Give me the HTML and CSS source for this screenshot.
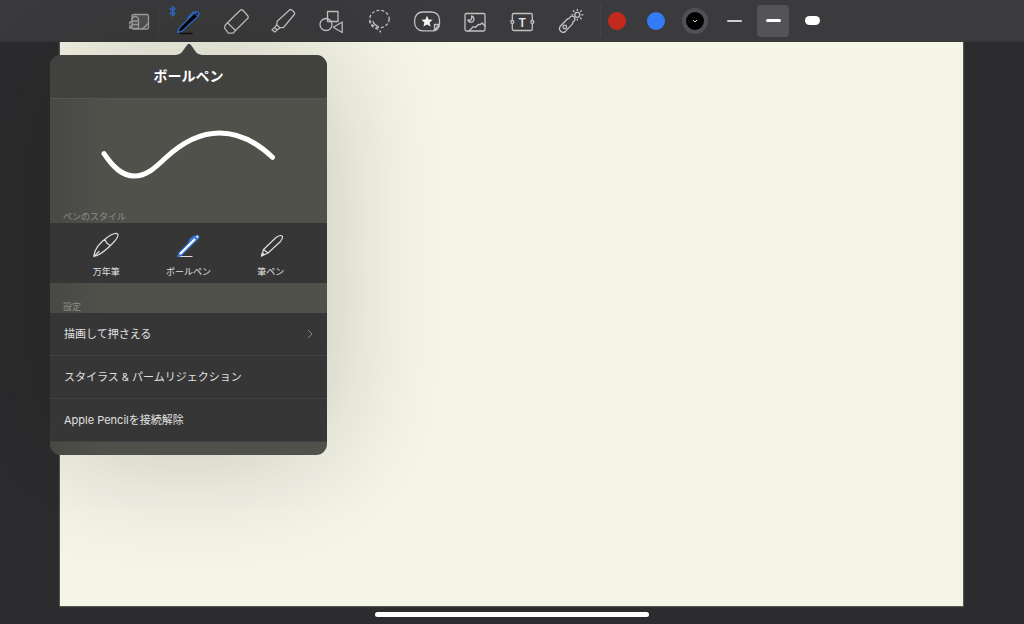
FILE: index.html
```html
<!DOCTYPE html>
<html lang="ja">
<head>
<meta charset="utf-8">
<meta name="viewport" content="width=device-width, initial-scale=1">
<title>ボールペン</title>
<link rel="stylesheet" href="styles.css">
</head>
<body>
<div class="app">
  <header class="toolbar">
    <button class="tool zoom-tool" type="button" aria-label="ズーム">
      <svg class="icon dim" viewBox="0 0 40 40"><rect class="shade" x="13" y="13.500" width="16.500" height="14.500" rx="1.500"/><path d="M13 27.500h6.500v-10l-2-2H15l-2 2M13 20h6.500M13.500 23.500h5M13 20.500c-2 0-2.500 1-2.500 2.500M13 24.500c-2 0-2.500 1-2.500 2.500h2.500M23.500 28l6-6"/></svg>
    </button>
    <nav class="tools" aria-label="ツール">
      <button class="tool" type="button" aria-label="ボールペン" aria-pressed="true">
        <svg class="icon" viewBox="0 0 40 40"><path class="bluetooth" d="M2 7.500l5 5-2.500 2.500V5.500L7 8l-5 5"/><path class="pen-line" d="M12 32.500h12"/><path class="pen-body" d="M9.500 31.500l2.200-5L26.500 11.700q2.200-1.700 3.700-.2t-.2 3.700L14.500 29.800z"/><path class="pen-clip" d="M27.500 11.500l-2.300-.2-5.700 5.700M27 12l3 3"/></svg>
      </button>
      <button class="tool" type="button" aria-label="消しゴム">
        <svg class="icon" viewBox="0 0 40 40"><path d="M24.300 9.300q1.200-1.200 2.500 0l5 5.500q1 1.300 0 2.500L19.500 29.500l-2.300 2.600h-4.800l-3.800-5 .4-2.600 2.500-2.800zM11.500 21.700l8 7.800"/></svg>
      </button>
      <button class="tool" type="button" aria-label="蛍光ペン">
        <svg class="icon" viewBox="0 0 40 40"><path d="M26.500 9q1-1 2.200 0l2.600 2.300q.9.900 0 2.200L20.500 26.500l-3.600.2-3.200-3 .5-3.500zM13.700 23.700l-2.200 2.900 2.700 2.500 2.700-2.400M11.500 26.600L9 28.800l2.700 2.300 2.500-2"/></svg>
      </button>
      <button class="tool" type="button" aria-label="図形">
        <svg class="icon" viewBox="0 0 40 40"><rect x="16.500" y="10.500" width="10.500" height="10"/><circle cx="15" cy="23.500" r="6"/><path d="M22.300 26.300L31.200 21v10.500z"/></svg>
      </button>
      <button class="tool" type="button" aria-label="なげなわ">
        <svg class="icon" viewBox="0 0 40 40"><ellipse class="dashed" cx="20.500" cy="18" rx="9.700" ry="8.700"/><path d="M10.800 19.500c-.3 4.500 3.500 7.300 7.500 8.500 2 .7 3 1.800 3.300 3.500" class="dashed"/><path d="M14 20.500c.8 2.600 2.800 4 5.500 5"/></svg>
      </button>
      <button class="tool" type="button" aria-label="ステッカー">
        <svg class="icon" viewBox="0 0 40 40"><path d="M15.500 11h9c5 0 8 3.500 8 8v4.500L26.500 29.800h-11c-5 0-8-4-8-9.300s3-9.500 8-9.500zM32.500 23.500h-5v6M32.400 23.500c0 3-2.500 6.300-6 6.300"/><path class="solid" d="M20 14.800l1.600 3.700 4 .3-3 2.700 1 4L20 23.400l-3.600 2.100 1-4-3-2.700 4-.3z"/></svg>
      </button>
      <button class="tool" type="button" aria-label="画像">
        <svg class="icon" viewBox="0 0 40 40"><rect x="10" y="12.500" width="20" height="17.500" rx="1.500"/><path d="M14 30l4.200-4.300 2.300.6 3-3 1.500.4 2-1.700 3 3M16.500 15c3 .5 3.500 5.800-.5 6.200-1.700.2-2.700-.7-3.300-2.200 3 1 4.700-1 3.800-4z"/></svg>
      </button>
      <button class="tool" type="button" aria-label="テキスト">
        <svg class="icon" viewBox="0 0 40 40"><path d="M10.300 19v-5q0-1.500 1.500-1.500h17q1.500 0 1.500 1.500v5M10.300 23v5q0 1.500 1.500 1.500h17q1.500 0 1.500-1.500v-5"/><circle cx="10.300" cy="21" r="1.500"/><circle cx="30.300" cy="21" r="1.500"/><text x="20.300" y="25.500" text-anchor="middle">T</text></svg>
      </button>
      <button class="tool" type="button" aria-label="レーザーポインタ">
        <svg class="icon" viewBox="0 0 40 40"><path d="M10.200 25.300l7.500-7.600 1.500-.2 1.300-2q2-1 3.500.3t.8 3.500l-2 1.700-.1 1.600-7.500 8q-2.300 1.600-4.500-.3t-.5-5z"/><circle cx="14.800" cy="26" r="1.800"/><circle cx="27.300" cy="13.800" r="2.500"/><path d="M27.300 9.500V8.500M30.500 10.600l.8-.8M31.800 13.800h1.200M30.500 17l.8.8M27.300 18.200v1M24.100 10.600l-.8-.8M22.800 13.800h-1"/></svg>
      </button>
    </nav>
    <div class="options" aria-label="色と太さ">
      <button class="option" type="button" aria-label="赤"><span class="swatch red"></span></button>
      <button class="option" type="button" aria-label="青"><span class="swatch blue"></span></button>
      <button class="option" type="button" aria-label="黒" aria-pressed="true"><span class="swatch black"><svg class="caret" viewBox="0 0 6 4"><path d="M1 1l2 2 2-2"/></svg></span></button>
      <button class="option" type="button" aria-label="細い"><span class="stroke thin"></span></button>
      <button class="option selected" type="button" aria-label="普通" aria-pressed="true"><span class="stroke medium"></span></button>
      <button class="option" type="button" aria-label="太い"><span class="stroke thick"></span></button>
    </div>
  </header>

  <main class="paper"></main>
  <footer class="home"><span class="home-bar"></span></footer>

  <section class="popover" aria-labelledby="popover-title">
    <svg class="arrow" viewBox="0 0 28 13"><path d="M0 13C6 12.500 7 9 11.500 2.800Q14-1 16.500 2.800C21 9 22 12.500 28 13z"/></svg>
    <div class="panel">
      <h1 class="title" id="popover-title">ボールペン</h1>
      <div class="preview">
        <svg class="curve" viewBox="0 0 176 54"><path d="M3 26.700C12.500 41 21.500 49 33.200 49C45.500 49 54.500 40.500 64.500 31C78.500 18 96.500 6 118.500 6C138.500 6 155.500 15 171.500 30.300"/></svg>
        <h2 class="caption">ペンのスタイル</h2>
      </div>
      <div class="styles">
        <button class="style" type="button">
          <svg class="style-icon" viewBox="0 0 28 28"><path d="M1.800 25.500C2.500 18 9 10.500 16.500 5.500C20 3 24.500 1.500 25.700 3.200S23 10 19.500 13.500C14 19 8 24.500 1.800 25.500zM13 8.500q1.500 4.500 5.500 6M2 25.500l5-5"/></svg>
          <span>万年筆</span>
        </button>
        <button class="style" type="button" aria-pressed="true">
          <svg class="style-icon" viewBox="0 0 28 28"><path class="pen-base" d="M6 25.500h12"/><path class="ball-edge" d="M3.500 25.500l1.500-4L14.500 12l1-3.500 4.500-3.500h2q1.300-1.500 2.500-.3t-.2 3L8 24z"/><path class="ball-core" d="M6.500 22.500L20.500 8.500M23.200 5.800h.1"/></svg>
          <span>ボールペン</span>
        </button>
        <button class="style" type="button">
          <svg class="style-icon" viewBox="0 0 28 28"><path d="M4.500 25l2-6.500L19 6.500q4.500-3 6-1.500t-1.500 5.500L11 22zM6.500 18.500l4.500 3.500"/><path class="solid" d="M4.500 25l1-3 1.800 1.500z"/></svg>
          <span>筆ペン</span>
        </button>
      </div>
      <h2 class="caption settings-caption">設定</h2>
      <ul class="settings">
        <li><button class="row" type="button"><span>描画して押さえる</span><svg class="chevron" viewBox="0 0 6 10"><path d="M1 1l4 4-4 4"/></svg></button></li>
        <li><button class="row" type="button">スタイラス &amp; パームリジェクション</button></li>
        <li><button class="row" type="button">Apple Pencilを接続解除</button></li>
      </ul>
    </div>
  </section>
</div>
</body>
</html>
```

FILE: styles.css
```css
* { box-sizing: border-box; }

body {
  margin: 0;
  background: #2c2c2e;
  color: #e0e0e0;
  font-family: Inter, "Noto Sans CJK JP", sans-serif;
}

button {
  margin: 0;
  padding: 0;
  border: 0;
  background: none;
  color: inherit;
  font: inherit;
  cursor: pointer;
}

.app {
  position: relative;
  display: flex;
  flex-direction: column;
  min-height: 100vh;
  overflow: hidden;
}

/* Toolbar */
.toolbar {
  display: flex;
  align-items: center;
  height: 42px;
  padding-left: 120px;
  background: #3b3b3d;
  border-bottom: 1px solid #363637;
}

.tool {
  display: flex;
  flex: 1;
  justify-content: center;
}

.zoom-tool {
  flex: none;
  width: 39px;
  border-right: 1px solid #444446;
  height: 32px;
  align-items: center;
}

.tools {
  display: flex;
  width: 430px;
  margin-left: 5px;
}

.icon {
  flex: none;
  width: 40px;
  height: 40px;
  fill: none;
  stroke: #c2c2c4;
  stroke-width: 1.3;
  stroke-linejoin: round;
  stroke-linecap: round;
}

.icon.dim { stroke: #a2a2a4; }
.icon .shade { fill: #515153; }
.icon .solid { fill: #f4f4f4; stroke: none; }
.icon .dashed { stroke-dasharray: 3 2; stroke-linecap: butt; }
.icon text {
  fill: #e8e8e8;
  stroke: none;
  font: 600 12px Inter, sans-serif;
}
.icon .bluetooth { stroke: #2f6fd6; stroke-width: 1.2; }
.icon .pen-line { stroke: #111; stroke-width: 1.5; }
.icon .pen-body { fill: #000; stroke: #3069c4; stroke-width: 1.4; }
.icon .pen-clip { stroke: #3069c4; stroke-width: 1.4; }

.options {
  display: flex;
  gap: 7px;
  margin-left: 6px;
  border-left: 1px solid #444446;
}

.option {
  display: flex;
  align-items: center;
  justify-content: center;
  width: 32px;
  height: 32px;
  border-radius: 4px;
}

.option.selected { background: #535358; }

.swatch {
  display: flex;
  align-items: center;
  justify-content: center;
  width: 18px;
  height: 18px;
  border-radius: 50%;
}

.red { background: #c4291d; }
.blue { background: #357af6; }
.black {
  flex: none;
  width: 26px;
  height: 26px;
  border: 4px solid #505055;
  background: #000;
}

.caret {
  width: 6px;
  height: 4px;
  fill: none;
  stroke: #ddd;
}

.stroke {
  width: 15px;
  border-radius: 5px;
  background: #fff;
}

.thin { height: 2px; background: #cfcfd0; }
.medium { height: 3px; }
.thick { height: 9px; }

/* Page */
.paper {
  flex: 1;
  margin: 0 61px 0 60px;
  background: #f5f5e8;
  box-shadow: 0 0 1px 1px #55554f;
  clip-path: inset(0 -2px -2px -2px);
}

.home {
  display: flex;
  justify-content: center;
  height: 18px;
  padding-top: 6px;
}

.home-bar {
  width: 274px;
  height: 5px;
  border-radius: 3px;
  background: #fff;
}

/* Pen popover */
.popover {
  position: absolute;
  top: 43px;
  left: 50px;
  width: 277px;
}

.arrow {
  display: block;
  width: 28px;
  height: 12px;
  margin: 0 auto;
  fill: #414240;
}

.panel {
  padding-bottom: 13px;
  border-radius: 11px;
  overflow: hidden;
  background: linear-gradient(90deg, #484945, #50514b 60px);
  box-shadow: 0 0 130px rgba(16, 20, 0, 0.22);
}

.title {
  margin: 0;
  padding: 0 14px 1px;
  border-bottom: 1px solid #555650;
  background: #414240;
  color: #fff;
  font-size: 14px;
  line-height: 42px;
  font-weight: 700;
  text-align: center;
}

.preview { padding-top: 28px; }

.curve {
  display: block;
  width: 176px;
  height: 54px;
  margin: 0 auto 29px;
  fill: none;
  stroke: #fff;
  stroke-width: 5;
  stroke-linecap: round;
}

.caption {
  margin: 0;
  padding: 0 13px;
  color: #8e8f89;
  font-size: 9px;
  line-height: 13px;
  font-weight: 400;
}

.styles {
  display: grid;
  grid-template-columns: repeat(3, 1fr);
  padding: 8px 15px 3px;
  background: #363636;
}

.style {
  display: flex;
  flex-direction: column;
  align-items: center;
  gap: 5px;
  font-size: 9px;
  line-height: 16px;
}

.style-icon {
  width: 28px;
  height: 28px;
  fill: none;
  stroke: #dcdcdc;
  stroke-width: 1.2;
  stroke-linejoin: round;
  stroke-linecap: round;
}

.style-icon .solid { fill: #dcdcdc; }
.style-icon .ball-edge { fill: #3978d6; stroke: #3978d6; stroke-width: 1; }
.style-icon .ball-core { stroke: #fff; stroke-width: 2; }

.settings-caption { padding-top: 17px; }

.settings {
  margin: 0;
  padding: 0;
  list-style: none;
  background: #363636;
}

.settings li { border-bottom: 1px solid #424242; }

.row {
  display: flex;
  align-items: center;
  justify-content: space-between;
  width: 100%;
  padding: 0 14px;
  font-size: 11px;
  line-height: 42px;
  text-align: left;
}

.chevron {
  width: 6px;
  height: 10px;
  fill: none;
  stroke: #858585;
}
```
